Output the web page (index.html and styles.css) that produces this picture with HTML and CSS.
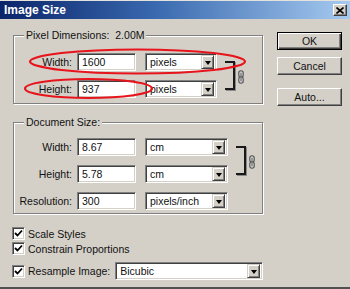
FILE: index.html
```html
<!DOCTYPE html>
<html>
<head>
<meta charset="utf-8">
<link rel="stylesheet" href="styles.css">
</head>
<body>
<div class="window">
  <div class="titlebar">
    <span class="title">Image Size</span>
    <span class="close"><svg width="8" height="7" viewBox="0 0 8 7"><path d="M0.5 0.5 L7.5 6.5 M7.5 0.5 L0.5 6.5" stroke="#000" stroke-width="1.6"/></svg></span>
  </div>
  <div class="content">
    <div class="main">
      <fieldset class="group g-pixel">
        <legend>Pixel Dimensions:&nbsp; 2.00M</legend>
        <div class="grid grid-pixel">
          <label class="lbl">Width:</label>
          <div class="field">1600</div>
          <div class="field select">pixels<span class="arrow"><i></i></span></div>
          <div class="link">
            <span class="bracket"></span>
            <svg class="chain" width="6" height="14" viewBox="0 0 6 14"><rect x="0.75" y="0.75" width="4.5" height="6.5" rx="2.2" fill="#c8c8c8" stroke="#555" stroke-width="1.1"/><rect x="0.75" y="6.75" width="4.5" height="6.5" rx="2.2" fill="#c8c8c8" stroke="#555" stroke-width="1.1"/><path d="M3 3 V11" stroke="#666" stroke-width="1"/></svg>
          </div>
          <label class="lbl">Height:</label>
          <div class="field">937</div>
          <div class="field select">pixels<span class="arrow"><i></i></span></div>
        </div>
      </fieldset>
      <fieldset class="group g-doc">
        <legend>Document Size:</legend>
        <div class="grid grid-doc">
          <label class="lbl">Width:</label>
          <div class="field">8.67</div>
          <div class="field select">cm<span class="arrow"><i></i></span></div>
          <div class="link">
            <span class="bracket"></span>
            <svg class="chain" width="6" height="14" viewBox="0 0 6 14"><rect x="0.75" y="0.75" width="4.5" height="6.5" rx="2.2" fill="#c8c8c8" stroke="#555" stroke-width="1.1"/><rect x="0.75" y="6.75" width="4.5" height="6.5" rx="2.2" fill="#c8c8c8" stroke="#555" stroke-width="1.1"/><path d="M3 3 V11" stroke="#666" stroke-width="1"/></svg>
          </div>
          <label class="lbl">Height:</label>
          <div class="field">5.78</div>
          <div class="field select">cm<span class="arrow"><i></i></span></div>
          <label class="lbl">Resolution:</label>
          <div class="field">300</div>
          <div class="field select">pixels/inch<span class="arrow"><i></i></span></div>
        </div>
      </fieldset>
      <div class="checks">
        <div class="check"><span class="box"><svg width="9" height="9" viewBox="0 0 9 9"><path d="M1 4 L3.5 6.5 L8 1.5" fill="none" stroke="#000" stroke-width="1.8"/></svg></span><span>Scale Styles</span></div>
        <div class="check"><span class="box"><svg width="9" height="9" viewBox="0 0 9 9"><path d="M1 4 L3.5 6.5 L8 1.5" fill="none" stroke="#000" stroke-width="1.8"/></svg></span><span>Constrain Proportions</span></div>
        <div class="check check-resample"><span class="box"><svg width="9" height="9" viewBox="0 0 9 9"><path d="M1 4 L3.5 6.5 L8 1.5" fill="none" stroke="#000" stroke-width="1.8"/></svg></span><span class="resample-lbl">Resample Image:</span><div class="field select wide">Bicubic<span class="arrow"><i></i></span></div></div>
      </div>
    </div>
    <div class="buttons">
      <div class="btn default">OK</div>
      <div class="btn">Cancel</div>
      <div class="btn auto">Auto...</div>
    </div>
  </div>
  <svg class="marks" width="350" height="289" viewBox="0 0 350 289">
    <ellipse cx="137.5" cy="60.5" rx="107.5" ry="12" fill="none" stroke="#e8141c" stroke-width="2.2"/>
    <ellipse cx="88.5" cy="87.5" rx="63.5" ry="9.5" fill="none" stroke="#e8141c" stroke-width="2.2"/>
  </svg>
</div>
</body>
</html>
```
FILE: styles.css
```css
* { box-sizing: border-box; }
html, body { margin: 0; padding: 0; background: #d4d0c8; }
body {
  font-family: "Liberation Sans", Arial, sans-serif;
  font-size: 10.5px;
  color: #111;
}
.window {
  position: relative;
  width: 350px;
  height: 289px;
  background: #d4d0c8;
  border-top: 1px solid #e4e2dc;
  border-bottom: 2px solid #505050;
  overflow: hidden;
}
.titlebar {
  height: 18px;
  display: flex;
  align-items: center;
  justify-content: space-between;
  padding: 0 3px 0 4px;
  background: linear-gradient(to right, #0a246a 0%, #3a6ab0 45%, #a6caf0 100%);
}
.title {
  color: #fff;
  font-weight: bold;
  font-size: 12px;
}
.close {
  width: 14px;
  height: 12px;
  display: flex;
  align-items: center;
  justify-content: center;
  background: #d4d0c8;
  border: 1px solid;
  border-color: #fff #404040 #404040 #fff;
  box-shadow: inset -1px -1px #808080;
}
.content {
  display: flex;
  align-items: flex-start;
}
.main {
  padding: 10px 0 0 13px;
  width: 263px;
}
.group {
  width: 250px;
  margin: 0;
  padding: 0;
  border: 1px solid #808080;
  box-shadow: inset 1px 1px #fff, 1px 1px #fff;
  min-width: 0;
}
.group legend {
  margin-left: 10px;
  padding: 0 2px;
  line-height: 13px;
  height: 13px;
  background: #d4d0c8;
  white-space: pre;
}
.g-pixel { padding-top: 11px; padding-bottom: 5px; }
.g-doc { margin-top: 12px; padding-top: 9px; padding-bottom: 3px; }
.grid {
  display: grid;
  grid-auto-rows: 18px;
  row-gap: 9px;
  align-items: center;
}
.grid-pixel { grid-template-columns: 58px 64px 81px auto; }
.grid-doc { grid-template-columns: 58px 64px 92px auto; }
.lbl {
  text-align: right;
  white-space: nowrap;
}
.field {
  height: 18px;
  background: #fff;
  border: 1px solid;
  border-color: #808080 #fff #fff #808080;
  box-shadow: inset 1px 1px #404040, inset -1px -1px #d4d0c8;
  padding: 0 0 0 4px;
  line-height: 16px;
  white-space: nowrap;
}
.grid .field { margin-left: 5px; }
.grid .select { margin-left: 9px; }
.select {
  display: flex;
  align-items: center;
  justify-content: space-between;
  padding-right: 2px;
}
.arrow {
  width: 13px;
  height: 14px;
  flex: none;
  background: #d4d0c8;
  border: 1px solid;
  border-color: #d4d0c8 #404040 #404040 #d4d0c8;
  box-shadow: inset 1px 1px #fff, inset -1px -1px #808080;
  display: flex;
  align-items: center;
  justify-content: center;
}
.arrow i {
  width: 0;
  height: 0;
  border-left: 3.5px solid transparent;
  border-right: 3.5px solid transparent;
  border-top: 4px solid #000;
  margin-top: 1px;
}
.link {
  grid-row: 1 / span 2;
  grid-column: 4;
  align-self: start;
  display: flex;
  align-items: center;
  margin-left: 8px;
  margin-top: 8px;
  height: 29px;
}
.bracket {
  width: 10px;
  height: 29px;
  border: 2px solid #1a1a1a;
  border-left: none;
  box-shadow: 1px 1px 0 #8a8a8a;
}
.chain {
  margin-left: 3px;
  margin-top: 2px;
}
.checks {
  margin-left: -1px;
  padding-top: 12px;
}
.check {
  display: flex;
  align-items: center;
  height: 15px;
}
.box {
  width: 13px;
  height: 13px;
  flex: none;
  background: #fff;
  border: 1px solid;
  border-color: #808080 #fff #fff #808080;
  box-shadow: inset 1px 1px #404040, inset -1px -1px #d4d0c8;
  display: flex;
  align-items: center;
  justify-content: center;
  margin-right: 3px;
}
.check-resample {
  height: 18px;
  margin-top: 6px;
}
.resample-lbl {
  width: 88px;
}
.wide {
  width: 149px;
}
.buttons {
  margin-left: 14px;
  padding-top: 13px;
  display: flex;
  flex-direction: column;
  width: 65px;
}
.btn {
  height: 18px;
  display: flex;
  align-items: center;
  justify-content: center;
  background: #d4d0c8;
  border: 1px solid;
  border-color: #fff #404040 #404040 #fff;
  box-shadow: inset -1px -1px #808080;
}
.btn.default {
  border-color: #000;
  box-shadow: inset 1px 1px #fff, inset -1px -1px #404040, inset -2px -2px #808080;
}
.btn + .btn { margin-top: 7px; }
.btn.auto { margin-top: 13px; }
.marks {
  position: absolute;
  left: 0;
  top: 0;
  pointer-events: none;
}
```
